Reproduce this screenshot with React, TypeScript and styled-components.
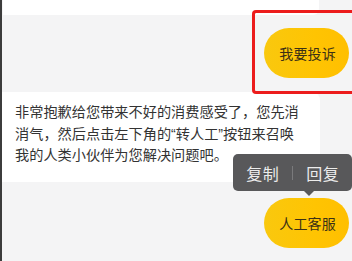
import React from "react";
import styled, { createGlobalStyle } from "styled-components";

const Global = createGlobalStyle`
  html, body { margin: 0; padding: 0; }
  body {
    background: #f4f4f5;
    font-family: "Liberation Sans", "Noto Sans CJK SC", sans-serif;
  }
`;

const Screen = styled.div`
  position: relative;
  width: 352px;
  height: 261px;
  overflow: hidden;
  background: #f4f4f5;
  border-left: 2px solid #3c3c3c;
  box-sizing: border-box;
  display: flex;
  flex-direction: column;
`;

const PrevBubble = styled.div`
  width: 316px;
  height: 15px;
  margin-left: 1px;
  background: #ffffff;
  border-bottom-right-radius: 6px;
`;

const Row = styled.div<{ $top: number; $right?: boolean }>`
  display: flex;
  justify-content: ${(p) => (p.$right ? "flex-end" : "flex-start")};
  padding-right: ${(p) => (p.$right ? 3 : 0)}px;
  margin-top: ${(p) => p.$top}px;
  position: relative;
`;

const YellowBubble = styled.div`
  height: 50px;
  padding: 0 13px 0 15px;
  display: flex;
  align-items: center;
  border-radius: 25px;
  background: linear-gradient(90deg, #f9c80e 0%, #ffc402 60%, #ffbf00 100%);
  color: #3b3016;
  font-size: 14px;
  letter-spacing: 0.2px;
  position: relative;
`;

const WhiteBubble = styled.div`
  width: 318px;
  height: 90px;
  box-sizing: border-box;
  padding: 10px 0 0 13px;
  background: #ffffff;
  border-radius: 0 8px 8px 0;
  color: #333333;
  font-size: 14.2px;
  line-height: 21.5px;
  white-space: nowrap;
`;

const Tooltip = styled.div`
  position: absolute;
  left: -31px;
  top: -44px;
  height: 37px;
  display: flex;
  align-items: center;
  background: #58585a;
  border-radius: 5px;
  color: #ececec;
  font-size: 16px;
  white-space: nowrap;
  &::after {
    content: "";
    position: absolute;
    left: 71px;
    bottom: -5px;
    border-left: 5px solid transparent;
    border-right: 5px solid transparent;
    border-top: 5px solid #58585a;
  }
`;

const TipItem = styled.span`
  padding: 0 13px;
  letter-spacing: 0.5px;
`;

const TipDivider = styled.span`
  width: 1px;
  height: 14px;
  background: #7a7a7c;
`;

const Highlight = styled.div`
  position: absolute;
  left: 250px;
  top: 10px;
  right: 0;
  height: 84px;
  border: 3px solid #ec1c1c;
  border-right: none;
  border-radius: 4px 0 0 4px;
  box-sizing: border-box;
  pointer-events: none;
`;

export default function App() {
  return (
    <>
      <Global />
      <Screen>
        <PrevBubble />
        <Row $top={13} $right>
          <YellowBubble>我要投诉</YellowBubble>
        </Row>
        <Row $top={14}>
          <WhiteBubble>
            非常抱歉给您带来不好的消费感受了，您先消
            <br />
            消气，然后点击左下角的“转人工”按钮来召唤
            <br />
            我的人类小伙伴为您解决问题吧。
          </WhiteBubble>
        </Row>
        <Row $top={16} $right>
          <YellowBubble>
            人工客服
            <Tooltip>
              <TipItem>复制</TipItem>
              <TipDivider />
              <TipItem>回复</TipItem>
            </Tooltip>
          </YellowBubble>
        </Row>
        <Highlight />
      </Screen>
    </>
  );
}
